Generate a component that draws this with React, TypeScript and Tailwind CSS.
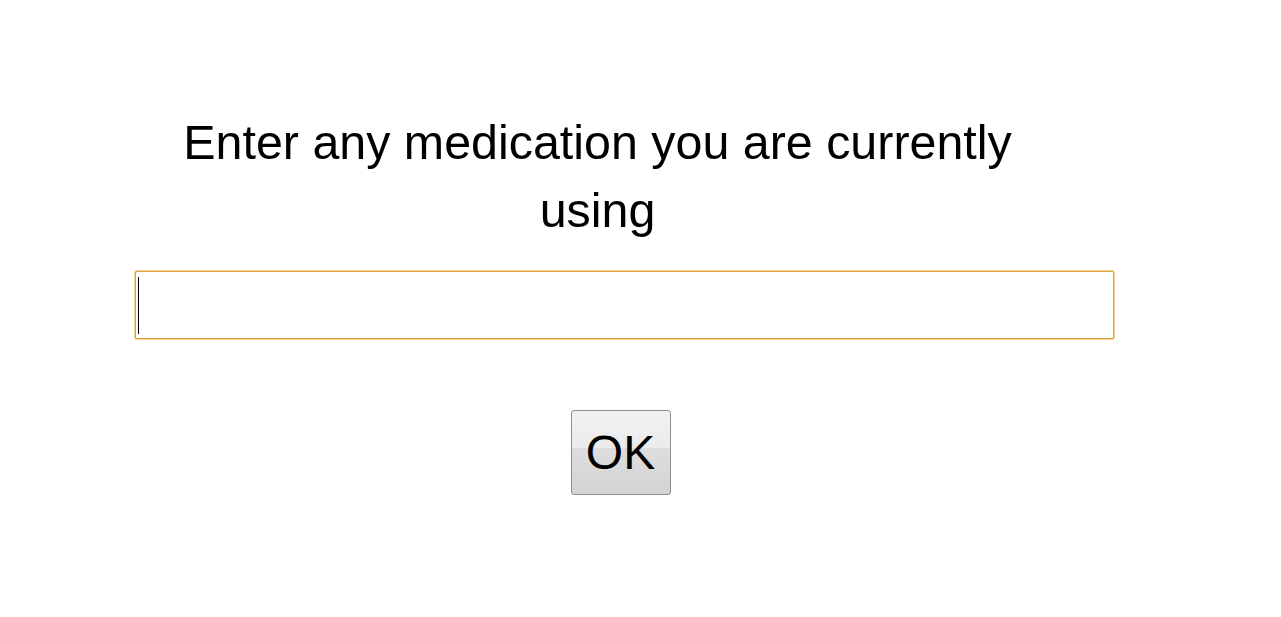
export default function App() {
  return (
    <div className="min-h-[617px] w-full bg-white font-['Liberation_Sans',Arial,sans-serif] text-black">
      <div className="ml-[135px] flex w-[979px] flex-col pt-[108px]">
        {/* Prompt */}
        <h1 className="mr-[54px] text-center text-[48.4px] font-normal leading-[68px]">
          Enter any medication you are currently using
        </h1>

        {/* Text field (focused, caret visible) */}
        <div
          role="textbox"
          className="mt-[27px] flex h-[68px] w-full items-center rounded-[2px] border border-[#d99f45] bg-white pl-[2px] ring-1 ring-[#f4d28f]"
        >
          <span className="h-[57px] w-px bg-black" />
        </div>

        {/* Confirm */}
        <div className="mt-[71px] flex justify-center pr-[8px]">
          <button className="h-[85px] w-[100px] rounded-[3px] border border-[#8e8e8e] bg-[linear-gradient(to_bottom,#f2f2f2_0%,#ebebeb_44%,#dedede_44%,#d3d3d3_100%)] text-[48px] leading-none text-black">
            OK
          </button>
        </div>
      </div>
    </div>
  );
}
